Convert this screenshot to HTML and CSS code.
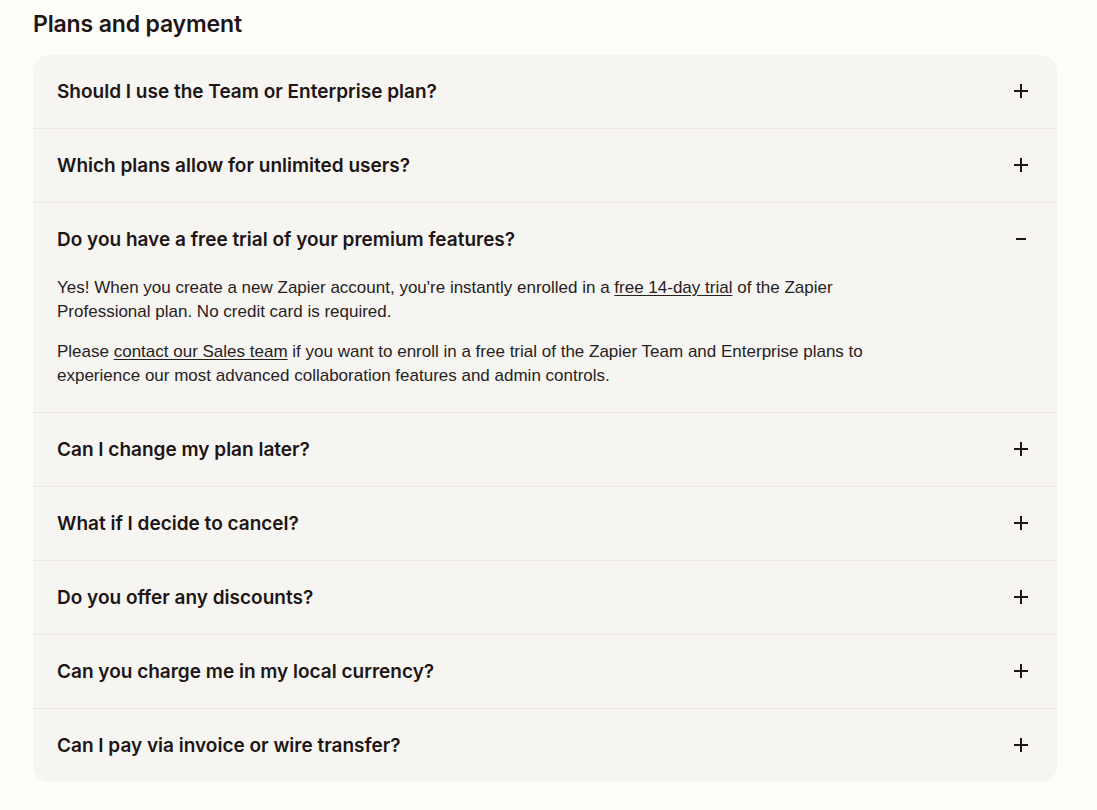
FILE: index.html
```html
<!DOCTYPE html>
<html lang="en">
<head>
<meta charset="utf-8">
<title>Plans and payment</title>
<link rel="stylesheet" href="styles.css">
</head>
<body>
<section class="faq">
  <h2 class="faq-title">Plans and payment</h2>
  <div class="card">
    <div class="item">
      <div class="q"><span>Should I use the Team or Enterprise plan?</span><svg class="icon" viewBox="0 0 24 24"><path d="M5 12h14M12 5v14"/></svg></div>
    </div>
    <div class="item">
      <div class="q"><span>Which plans allow for unlimited users?</span><svg class="icon" viewBox="0 0 24 24"><path d="M5 12h14M12 5v14"/></svg></div>
    </div>
    <div class="item open">
      <div class="q"><span>Do you have a free trial of your premium features?</span><svg class="icon" viewBox="0 0 24 24"><path d="M7 12h10"/></svg></div>
      <div class="a">
        <p>Yes! When you create a new Zapier account, you're instantly enrolled in a <a href="#">free 14-day trial</a> of the Zapier Professional plan. No credit card is required.</p>
        <p>Please <a href="#">contact our Sales team</a> if you want to enroll in a free trial of the Zapier Team and Enterprise plans to experience our most advanced collaboration features and admin controls.</p>
      </div>
    </div>
    <div class="item">
      <div class="q"><span>Can I change my plan later?</span><svg class="icon" viewBox="0 0 24 24"><path d="M5 12h14M12 5v14"/></svg></div>
    </div>
    <div class="item">
      <div class="q"><span>What if I decide to cancel?</span><svg class="icon" viewBox="0 0 24 24"><path d="M5 12h14M12 5v14"/></svg></div>
    </div>
    <div class="item">
      <div class="q"><span>Do you offer any discounts?</span><svg class="icon" viewBox="0 0 24 24"><path d="M5 12h14M12 5v14"/></svg></div>
    </div>
    <div class="item">
      <div class="q"><span>Can you charge me in my local currency?</span><svg class="icon" viewBox="0 0 24 24"><path d="M5 12h14M12 5v14"/></svg></div>
    </div>
    <div class="item">
      <div class="q"><span>Can I pay via invoice or wire transfer?</span><svg class="icon" viewBox="0 0 24 24"><path d="M5 12h14M12 5v14"/></svg></div>
    </div>
  </div>
</section>
</body>
</html>
```
FILE: styles.css
```css
html, body {
  margin: 0;
  padding: 0;
  background: #fffdf9;
  color: #201515;
  font-family: Inter, "Liberation Sans", Arial, sans-serif;
}
.faq {
  padding: 8px 40px 0 33px;
}
.faq-title {
  margin: 0 0 15px;
  font-size: 23px;
  line-height: 32px;
  font-weight: 600;
  letter-spacing: -0.15px;
}
.card {
  width: 1024px;
  background: #f7f5f2;
  border-radius: 16px;
  overflow: hidden;
}
.item {
  border-bottom: 1px solid #ebe8e3;
}
.item:last-child {
  border-bottom: none;
}
.q {
  display: flex;
  align-items: center;
  justify-content: space-between;
  height: 72px;
  padding: 0 24px 1px;
  font-size: 19px;
  font-weight: 600;
  line-height: 1;
}
.icon {
  width: 24px;
  height: 24px;
  fill: none;
  stroke: #201515;
  stroke-width: 2;
  flex: none;
}
.a {
  padding: 0 24px 24px;
  max-width: 840px;
  font-family: "Liberation Sans", Arial, sans-serif;
  font-size: 17px;
  line-height: 24px;
  color: #262222;
}
.a p {
  margin: 0 0 16px;
}
.a p:last-child {
  margin-bottom: 0;
}
.a a {
  color: inherit;
  text-decoration: underline;
  text-underline-offset: 2px;
}
```
